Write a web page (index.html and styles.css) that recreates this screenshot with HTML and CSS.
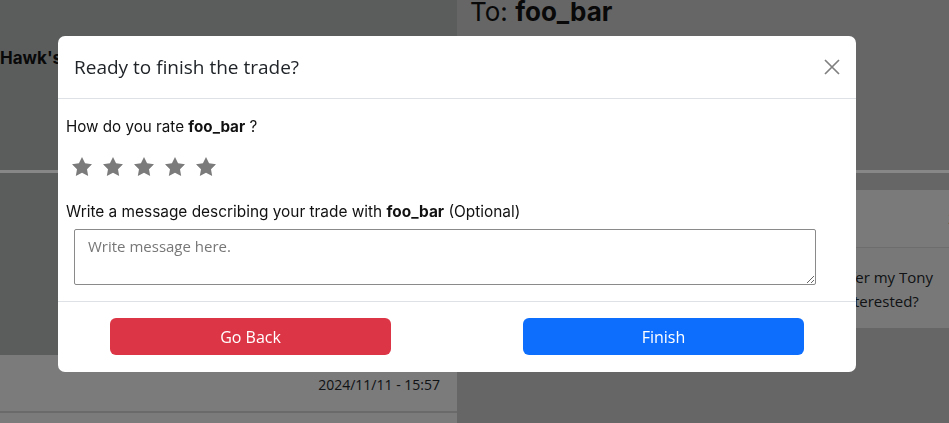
FILE: index.html
```html
<!DOCTYPE html>
<html lang="en">
<head>
<meta charset="utf-8">
<title>Trade</title>
<link rel="stylesheet" href="styles.css">
</head>
<body>
<div class="page">
  <header class="top">
    <div class="top-left"><h2 class="game-title">Hawk's Pro Skater 2</h2></div>
    <div class="top-right"><h1 class="to-title">To: <b>foo_bar</b></h1></div>
  </header>
  <main class="main">
    <section class="left-col">
      <div class="left-spacer"></div>
      <div class="date-row">2024/11/11 - 15:57</div>
      <div class="date-row next"></div>
    </section>
    <section class="right-col">
      <article class="card">
        <div class="card-head"><span class="card-user">foo_bar</span><span class="card-date">2024/11/11 - 15:57</span></div>
        <div class="card-body">
          <div class="msg-block">
            <span class="line">Hi there! I'd like to offer my Tony</span>
            <span class="line">Hawk's 2 :) Are you interested?</span>
          </div>
        </div>
      </article>
    </section>
  </main>
</div>

<div class="backdrop"></div>
<div class="modal" role="dialog">
  <div class="modal-header">
    <h5 class="modal-title">Ready to finish the trade?</h5>
    <button class="btn-close" aria-label="Close">
      <svg width="16" height="16" viewBox="0 0 16 16"><path d="M1 1 L15 15 M15 1 L1 15" stroke="#808080" stroke-width="1.7" fill="none"/></svg>
    </button>
  </div>
  <div class="modal-body">
    <p class="label">How do you rate <b>foo_bar</b> ?</p>
    <div class="stars">
      <svg class="star" viewBox="0 0 24 24"><polygon points="12,2 15.09,8.26 22,9.27 17,14.14 18.18,21.02 12,17.77 5.82,21.02 7,14.14 2,9.27 8.91,8.26"/></svg>
      <svg class="star" viewBox="0 0 24 24"><polygon points="12,2 15.09,8.26 22,9.27 17,14.14 18.18,21.02 12,17.77 5.82,21.02 7,14.14 2,9.27 8.91,8.26"/></svg>
      <svg class="star" viewBox="0 0 24 24"><polygon points="12,2 15.09,8.26 22,9.27 17,14.14 18.18,21.02 12,17.77 5.82,21.02 7,14.14 2,9.27 8.91,8.26"/></svg>
      <svg class="star" viewBox="0 0 24 24"><polygon points="12,2 15.09,8.26 22,9.27 17,14.14 18.18,21.02 12,17.77 5.82,21.02 7,14.14 2,9.27 8.91,8.26"/></svg>
      <svg class="star" viewBox="0 0 24 24"><polygon points="12,2 15.09,8.26 22,9.27 17,14.14 18.18,21.02 12,17.77 5.82,21.02 7,14.14 2,9.27 8.91,8.26"/></svg>
    </div>
    <p class="label msg-label">Write a message describing your trade with <b>foo_bar</b> (Optional)</p>
    <textarea class="message" placeholder="Write message here."></textarea>
  </div>
  <div class="modal-footer">
    <button class="btn btn-danger">Go Back</button>
    <button class="btn btn-primary">Finish</button>
  </div>
</div>
</body>
</html>
```
FILE: styles.css
```css
html, body {
  margin: 0;
  padding: 0;
  overflow: hidden;
  height: 100%;
}
body {
  background: #c0c0c0;
  font-family: "Open Sans", "Noto Sans", sans-serif;
  color: #212529;
}
.page {
  width: 949px;
  height: 423px;
  overflow: hidden;
}
.top {
  display: grid;
  grid-template-columns: 457px 1fr;
  height: 170px;
  border-bottom: 3px solid #ffffff;
}
.top-left {
  background: #acb0b0;
  overflow: hidden;
}
.top-right {
  background: #c0c0c0;
}
.game-title {
  margin: 48px 0 0 0;
  font-family: Inter, "DejaVu Sans", sans-serif;
  font-size: 17px;
  font-weight: 700;
  white-space: nowrap;
  color: #111;
}
.to-title {
  margin: -3px 0 0 13px;
  font-family: Inter, "DejaVu Sans", sans-serif;
  font-size: 26px;
  font-weight: 400;
  color: #111;
  line-height: 30px;
}
.to-title b { font-weight: 700; }
.main {
  display: grid;
  grid-template-columns: 457px 1fr;
  height: 250px;
}
.left-col {
  background: #acb0b0;
  display: flex;
  flex-direction: column;
}
.left-spacer {
  height: 182px;
}
.date-row {
  background: #e8e8e8;
  height: 58px;
  border-bottom: 2px solid #c8c8c8;
  display: flex;
  align-items: center;
  justify-content: flex-end;
  padding-right: 17px;
  font-size: 14px;
  padding-top: 2px;
  box-sizing: border-box;
}
.date-row.next {
  height: 20px;
}
.right-col {
  background: #c0c0c0;
  padding: 17px 0 0 20px;
  overflow: hidden;
}
.card {
  width: 609px;
  background: #e2e2e2;
}
.card-head {
  height: 57px;
  display: flex;
  align-items: center;
  justify-content: space-between;
  padding: 0 16px;
  background: #e6e6e6;
  border-bottom: 1px solid #cfcfcf;
  font-size: 14px;
}
.card-body {
  display: flex;
  justify-content: flex-end;
  padding: 17px 153px 15px 16px;
  font-size: 15px;
  line-height: 24px;
}
.msg-block {
  display: flex;
  flex-direction: column;
}
.line { white-space: nowrap; }

.backdrop {
  position: fixed;
  inset: 0;
  background: rgba(0, 0, 0, 0.47);
}
.modal {
  position: fixed;
  left: 58px;
  top: 36px;
  width: 798px;
  background: #fff;
  border-radius: 7px;
  overflow: hidden;
}
.modal-header {
  display: flex;
  align-items: center;
  justify-content: space-between;
  padding: 16px;
  border-bottom: 1px solid #dee2e6;
  height: 30px;
}
.modal-title {
  margin: 0;
  font-size: 19px;
  font-weight: 400;
  line-height: 30px;
  color: #212529;
}
.btn-close {
  border: 0;
  background: none;
  padding: 0;
  width: 16px;
  height: 16px;
  display: flex;
}
.modal-body {
  padding: 18px 8px 16px;
  font-family: Inter, "DejaVu Sans", sans-serif;
  color: #111;
}
.label {
  margin: 0;
  font-size: 15.2px;
  line-height: 20px;
}
.label b { font-weight: 700; }
.msg-label {
  margin-top: 23px;
  font-size: 15.4px;
}
.stars {
  display: flex;
  gap: 7px;
  margin: 18px 0 0 4px;
  height: 24px;
}
.star {
  width: 24px;
  height: 24px;
  fill: #7b7b7b;
}
.message {
  display: block;
  box-sizing: border-box;
  width: 742px;
  height: 56px;
  margin: 7px 0 0 8px;
  padding: 6px 13px;
  border: 1px solid #8a8a8a;
  border-radius: 2px;
  font-family: "Open Sans", "Noto Sans", sans-serif;
  font-size: 15px;
  resize: vertical;
}
.message::placeholder { color: #777; }
.modal-footer {
  display: flex;
  justify-content: space-between;
  padding: 16px 52px 17px;
  border-top: 1px solid #dee2e6;
}
.btn {
  width: 281px;
  height: 37px;
  border: 0;
  border-radius: 6px;
  color: #fff;
  font-family: "Open Sans", "Noto Sans", sans-serif;
  font-size: 16px;
}
.btn-danger { background: #dc3545; }
.btn-primary { background: #0d6efd; }
```
